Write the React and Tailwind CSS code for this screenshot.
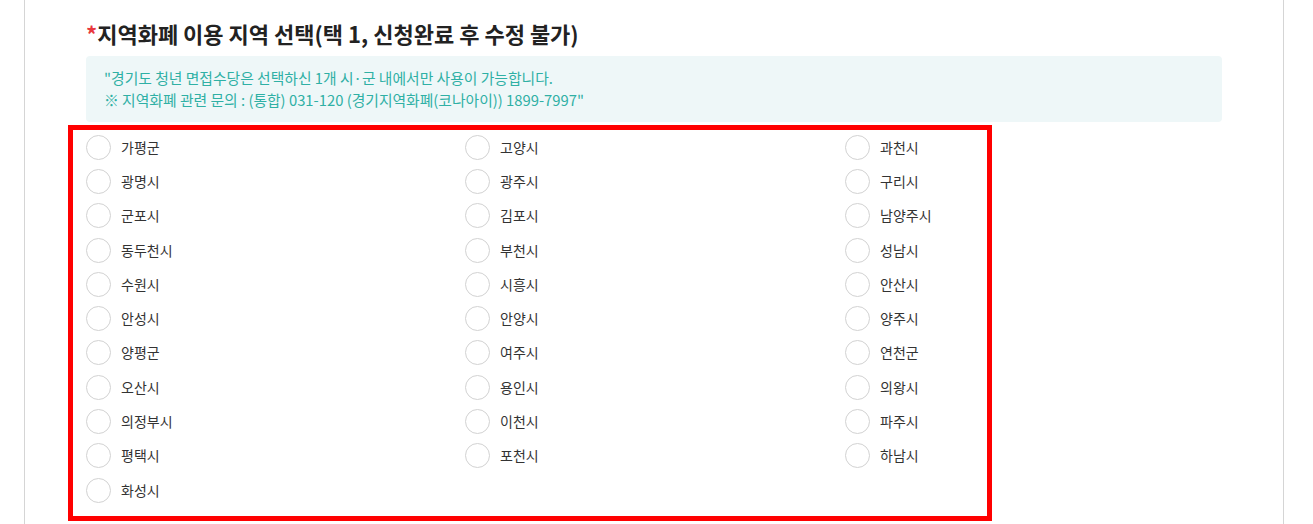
import React from "react";

const regions = [
    "가평군", "고양시", "과천시",
    "광명시", "광주시", "구리시",
    "군포시", "김포시", "남양주시",
    "동두천시", "부천시", "성남시",
    "수원시", "시흥시", "안산시",
    "안성시", "안양시", "양주시",
    "양평군", "여주시", "연천군",
    "오산시", "용인시", "의왕시",
    "의정부시", "이천시", "파주시",
    "평택시", "포천시", "하남시",
    "화성시",
];

function App() {
    return (
        <div
            className="min-h-[524px] bg-white"
            style={{ fontFamily: '"Noto Sans CJK KR", "Noto Sans", sans-serif' }}
        >
            <div className="ml-[24px] w-[1260px] min-h-[524px] border-x border-[#d5d5d5] px-[61px] pt-[19px]">
                {/* Title */}
                <h2 className="text-[22px] leading-[28px] font-bold text-[#222]">
                    <span className="text-[#e8383d]">*</span>지역화폐 이용 지역 선택(택 1, 신청완료 후 수정 불가)
                </h2>

                {/* Notice box */}
                <div className="mt-[9px] rounded-[4px] bg-[#eef7f8] px-[18px] py-[11px] text-[14.8px] leading-[22px] text-[#2fb0a5]">
                    <p>"경기도 청년 면접수당은 선택하신 1개 시·군 내에서만 사용이 가능합니다.</p>
                    <p>※ 지역화폐 관련 문의 : (통합) 031-120 (경기지역화폐(코나아이)) 1899-7997"</p>
                </div>

                {/* Radio list */}
                <div className="relative mt-[8px]">
                    <div className="grid grid-cols-[379px_380px_379px] auto-rows-[34.3px]">
                        {regions.map((name) => (
                            <label key={name} className="flex items-center gap-[10px] cursor-pointer">
                                <span className="w-[25px] h-[25px] rounded-full border border-[#d2d2d2] bg-white shrink-0"></span>
                                <span className="text-[14px] text-[#333]">{name}</span>
                            </label>
                        ))}
                    </div>
                    {/* annotation box */}
                    <div className="pointer-events-none absolute left-[-18px] top-[-5px] w-[924px] h-[396px] border-[5px] border-[#ff0000]"></div>
                </div>
            </div>
        </div>
    );
}

export default App;
